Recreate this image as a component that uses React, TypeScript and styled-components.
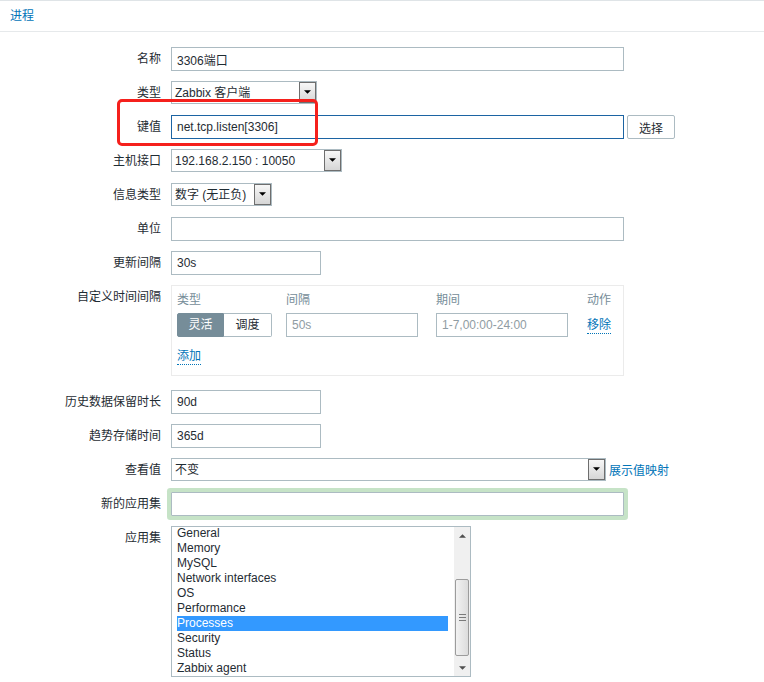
import React from 'react'
import styled, { createGlobalStyle } from 'styled-components'

const GlobalStyle = createGlobalStyle`
  html, body {
    margin: 0;
    padding: 0;
    background: #fff;
  }
  body {
    font-family: "Liberation Sans", Arial, "Noto Sans CJK SC", sans-serif;
    font-size: 12px;
    color: #1f2c33;
  }
`

const FONT = `"Liberation Sans", Arial, "Noto Sans CJK SC", sans-serif`

const applications = [
  'General',
  'Memory',
  'MySQL',
  'Network interfaces',
  'OS',
  'Performance',
  'Processes',
  'Security',
  'Status',
  'Zabbix agent',
]

const Arrow: React.FC<{ dir?: 'down' | 'up'; size?: number; color?: string }> = ({
  dir = 'down',
  size = 7,
  color = '#000',
}) => (
  <svg width={size} height={Math.ceil(size / 2)} viewBox="0 0 8 4">
    {dir === 'down' ? <polygon points="0,0 8,0 4,4" fill={color} /> : <polygon points="0,4 8,4 4,0" fill={color} />}
  </svg>
)

const Select: React.FC<{ width: number; value: string }> = ({ width, value }) => (
  <SelectBox $width={width}>
    <SelectValue>{value}</SelectValue>
    <SelectButton>
      <Arrow />
    </SelectButton>
  </SelectBox>
)

const App: React.FC = () => (
  <Page>
    <GlobalStyle />
    <TabBar>
      <TabTitle>进程</TabTitle>
    </TabBar>
    <Form>
      <Row>
        <Label>名称</Label>
        <Field>
          <TextInput $width={453} defaultValue="3306端口" readOnly />
        </Field>
      </Row>
      <Row>
        <Label>类型</Label>
        <Field>
          <Select width={146} value="Zabbix 客户端" />
        </Field>
      </Row>
      <Row>
        <Label>键值</Label>
        <Field>
          <TextInput $width={453} $focused defaultValue="net.tcp.listen[3306]" readOnly />
          <Button>选择</Button>
        </Field>
      </Row>
      <Row>
        <Label>主机接口</Label>
        <Field>
          <Select width={171} value="192.168.2.150 : 10050" />
        </Field>
      </Row>
      <Row>
        <Label>信息类型</Label>
        <Field>
          <Select width={101} value="数字 (无正负)" />
        </Field>
      </Row>
      <Row>
        <Label>单位</Label>
        <Field>
          <TextInput $width={453} readOnly />
        </Field>
      </Row>
      <Row>
        <Label>更新间隔</Label>
        <Field>
          <TextInput $width={150} defaultValue="30s" readOnly />
        </Field>
      </Row>
      <Row $gap={14}>
        <Label>自定义时间间隔</Label>
        <Field>
          <IntervalBox>
            <IntervalGrid>
              <ColHead>类型</ColHead>
              <ColHead>间隔</ColHead>
              <ColHead>期间</ColHead>
              <ColHead>动作</ColHead>
              <Segmented>
                <Segment $active>灵活</Segment>
                <Segment>调度</Segment>
              </Segmented>
              <TextInput $width={132} $muted defaultValue="50s" readOnly />
              <TextInput $width={132} $muted defaultValue="1-7,00:00-24:00" readOnly />
              <LinkText>移除</LinkText>
            </IntervalGrid>
            <AddRow>
              <LinkText>添加</LinkText>
            </AddRow>
          </IntervalBox>
        </Field>
      </Row>
      <Row>
        <Label>历史数据保留时长</Label>
        <Field>
          <TextInput $width={150} defaultValue="90d" readOnly />
        </Field>
      </Row>
      <Row>
        <Label>趋势存储时间</Label>
        <Field>
          <TextInput $width={150} defaultValue="365d" readOnly />
        </Field>
      </Row>
      <Row>
        <Label>查看值</Label>
        <Field>
          <Select width={435} value="不变" />
          <PlainLink>展示值映射</PlainLink>
        </Field>
      </Row>
      <Row>
        <Label>新的应用集</Label>
        <Field>
          <TextInput $width={453} $glow readOnly />
        </Field>
      </Row>
      <Row>
        <Label>应用集</Label>
        <Field>
          <ListBox>
            <ListItems>
              {applications.map((name) => (
                <ListItem key={name} $selected={name === 'Processes'}>
                  {name}
                </ListItem>
              ))}
            </ListItems>
            <ScrollBar>
              <ScrollArrow>
                <Arrow dir="up" size={7} color="#505050" />
              </ScrollArrow>
              <ScrollTrack>
                <ScrollThumb>
                  <Grip />
                  <Grip />
                  <Grip />
                </ScrollThumb>
              </ScrollTrack>
              <ScrollArrow>
                <Arrow dir="down" size={7} color="#505050" />
              </ScrollArrow>
            </ScrollBar>
          </ListBox>
        </Field>
      </Row>
    </Form>
    <Annotation />
  </Page>
)
export default App

const Page = styled.div`
  position: relative;
  width: 764px;
  min-height: 682px;
  background: #fff;
`
const TabBar = styled.div`
  height: 30px;
  border-top: 1px solid #dfe4e7;
  border-bottom: 1px solid #e6e9eb;
  display: flex;
  align-items: center;
  padding-left: 10px;
`
const TabTitle = styled.span`
  color: #0275b8;
  font-size: 12px;
  line-height: 30px;
`
const Form = styled.div`
  padding-top: 15px;
`
const Row = styled.div<{ $gap?: number }>`
  display: grid;
  grid-template-columns: 161px 1fr;
  column-gap: 10px;
  align-items: start;
  margin-bottom: ${(p) => p.$gap ?? 10}px;
`
const Label = styled.div`
  text-align: right;
  line-height: 24px;
  white-space: nowrap;
  color: #1f2c33;
`
const Field = styled.div`
  display: flex;
  align-items: center;
  gap: 3px;
`
const TextInput = styled.input<{ $width: number; $focused?: boolean; $muted?: boolean; $glow?: boolean }>`
  box-sizing: border-box;
  width: ${(p) => p.$width}px;
  height: 24px;
  margin: 0;
  padding: 0 5px;
  border: 1px solid ${(p) => (p.$focused ? '#1c64a3' : '#acbbc2')};
  background: #fff;
  font-family: ${FONT};
  font-size: 12px;
  color: ${(p) => (p.$muted ? '#8f9ca3' : '#1f2c33')};
  outline: none;
  box-shadow: ${(p) => (p.$glow ? '0 0 0 4px #c6e3c7' : 'none')};
  border-radius: ${(p) => (p.$glow ? '1px' : '0')};
`
const Button = styled.button`
  box-sizing: border-box;
  width: 48px;
  height: 24px;
  margin: 0;
  border: 1px solid #acbbc2;
  border-radius: 2px;
  background: #fff;
  font-family: ${FONT};
  font-size: 12px;
  color: #1f2c33;
  padding: 0;
`
const SelectBox = styled.div<{ $width: number }>`
  box-sizing: border-box;
  width: ${(p) => p.$width}px;
  height: 23px;
  border: 1px solid #acbbc2;
  background: #fff;
  display: flex;
  align-items: stretch;
`
const SelectValue = styled.div`
  flex: 1;
  padding-left: 3px;
  line-height: 22px;
  font-size: 12px;
  color: #1f2c33;
  white-space: nowrap;
  overflow: hidden;
`
const SelectButton = styled.div`
  box-sizing: border-box;
  width: 17px;
  border: 1px solid #6e6e6e;
  background: linear-gradient(#f7f7f7, #d6d6d6);
  display: flex;
  align-items: center;
  justify-content: center;
  padding-bottom: 2px;
`
const IntervalBox = styled.div`
  box-sizing: border-box;
  width: 453px;
  height: 91px;
  border: 1px solid #ebebeb;
  padding: 4px 5px 0;
`
const IntervalGrid = styled.div`
  display: grid;
  grid-template-columns: 109px 150px 151px auto;
  grid-template-rows: 20px 24px;
  row-gap: 3px;
  align-items: center;
`
const ColHead = styled.div`
  color: #768d99;
  line-height: 20px;
`
const Segmented = styled.div`
  display: flex;
  width: 95px;
`
const Segment = styled.div<{ $active?: boolean }>`
  box-sizing: border-box;
  width: ${(p) => (p.$active ? 47 : 48)}px;
  height: 24px;
  line-height: 22px;
  text-align: center;
  border: 1px solid ${(p) => (p.$active ? '#768d99' : '#acbbc2')};
  border-left-width: ${(p) => (p.$active ? 1 : 0)}px;
  background: ${(p) => (p.$active ? '#768d99' : '#fff')};
  color: ${(p) => (p.$active ? '#fff' : '#1f2c33')};
  border-radius: ${(p) => (p.$active ? '2px 0 0 2px' : '0 2px 2px 0')};
`
const LinkText = styled.span`
  justify-self: start;
  color: #0275b8;
  line-height: 16px;
  border-bottom: 1px dotted #0275b8;
`
const AddRow = styled.div`
  margin-top: 11px;
  display: flex;
`
const PlainLink = styled.span`
  color: #0275b8;
`
const ListBox = styled.div`
  box-sizing: border-box;
  width: 300px;
  height: 151px;
  border: 1px solid #acbbc2;
  background: #fff;
  display: flex;
`
const ListItems = styled.div`
  flex: 1;
  padding: 0 6px 0 5px;
  margin-top: -1px;
  overflow: hidden;
`
const ListItem = styled.div<{ $selected?: boolean }>`
  height: 15px;
  line-height: 15px;
  font-size: 12px;
  white-space: nowrap;
  background: ${(p) => (p.$selected ? '#3399ff' : 'transparent')};
  color: ${(p) => (p.$selected ? '#fff' : '#1f2c33')};
`
const ScrollBar = styled.div`
  width: 16px;
  background: #f0f0f0;
  display: flex;
  flex-direction: column;
`
const ScrollArrow = styled.div`
  height: 17px;
  display: flex;
  align-items: center;
  justify-content: center;
`
const ScrollTrack = styled.div`
  flex: 1;
  display: flex;
  flex-direction: column;
  justify-content: flex-end;
  padding: 0 1px 3px;
`
const ScrollThumb = styled.div`
  box-sizing: border-box;
  height: 77px;
  border: 1px solid #9c9c9c;
  border-radius: 2px;
  background: linear-gradient(90deg, #f2f2f2, #dcdcdc);
  display: flex;
  flex-direction: column;
  align-items: center;
  justify-content: center;
  gap: 2px;
`
const Grip = styled.div`
  width: 7px;
  height: 1px;
  background: #7a7a7a;
`
const Annotation = styled.div`
  position: absolute;
  left: 117px;
  top: 99px;
  width: 201px;
  height: 47px;
  box-sizing: border-box;
  border: 3px solid #f5201c;
  border-radius: 5px;
  pointer-events: none;
`
